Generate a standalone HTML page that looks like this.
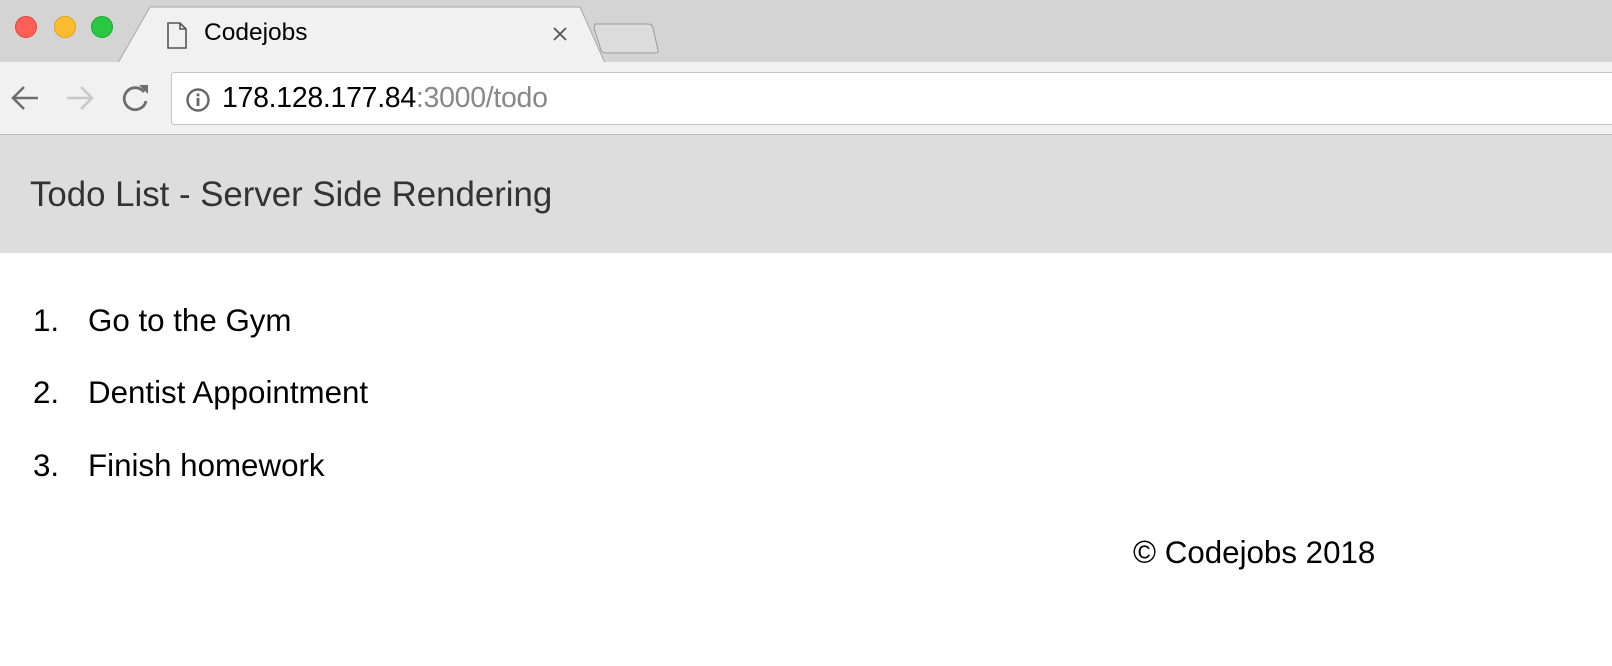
<!DOCTYPE html>
<html><head><style>
*{margin:0;padding:0;box-sizing:border-box}
body{width:1612px;height:666px;overflow:hidden;background:#fff;font-family:"Liberation Sans",Arial,sans-serif;position:relative}
.strip{position:absolute;left:0;top:0;width:1612px;height:63px;background:#d3d4d3;border-bottom:1px solid #a8a8a8}
.dot{position:absolute;top:16px;width:22px;height:22px;border-radius:50%}
.toolbar{position:absolute;left:0;top:62px;width:1612px;height:73px;background:#f1f1f1;border-bottom:1px solid #b8b8b8}
.addr{position:absolute;left:171px;top:10px;width:1460px;height:53px;background:#fff;border:1px solid #c2c2c2;border-radius:3px}
.url{position:absolute;left:50px;top:9px;font-size:28.5px;color:#000;letter-spacing:-0.3px}
.header{position:absolute;left:0;top:135px;width:1612px;height:118px;background:#dddddd}
.header h1{position:absolute;left:30px;top:40px;font-size:34.8px;font-weight:normal;color:#333}
.item{position:absolute;font-size:31.3px;color:#000}
</style></head><body>
<div class="strip"></div>
<div class="dot" style="left:15px;background:#fe5f57;border:1px solid #e0443e"></div>
<div class="dot" style="left:54px;background:#febc2e;border:1px solid #dea123"></div>
<div class="dot" style="left:91px;background:#28c840;border:1px solid #1aab29"></div>
<svg style="position:absolute;left:0;top:0" width="700" height="64">
<path d="M118 63 L150 7 L580 7 L605 63 Z" fill="#f1f1f1" stroke="#a8a8a8" stroke-width="1"/>
<rect x="118" y="62" width="488" height="3" fill="#f1f1f1"/>
<path d="M595 24 L648 24 Q652 24 653 28 L658 50 Q659 53 655 53 L606 53 Q602 53 601 50 L594 28 Z" fill="#dcdcdc" stroke="#9a9a9a" stroke-width="1"/>
<path d="M168 23 L180 23 L186 29 L186 48 L168 48 Z M180 23 L180 29 L186 29" fill="none" stroke="#555" stroke-width="1.6"/>
<path d="M554 28 L566 40 M566 28 L554 40" stroke="#555" stroke-width="1.8"/>
</svg>
<div style="position:absolute;left:204px;top:19px;font-size:24.5px;color:#000">Codejobs</div>
<div class="toolbar">
<svg style="position:absolute;left:0;top:0" width="170" height="73">
<path d="M38 36 L14 36 M24 25 L13 36 L24 47" fill="none" stroke="#6e6e6e" stroke-width="2.6"/>
<path d="M67 36 L91 36 M81 25 L92 36 L81 47" fill="none" stroke="#c8c8c8" stroke-width="2.6"/>
<path d="M144 30 A11 11 0 1 0 146 39" fill="none" stroke="#6e6e6e" stroke-width="2.8"/>
<path d="M139 23 L148 23 L148 32 Z" fill="#6e6e6e"/>
</svg>
<div class="addr">
<svg style="position:absolute;left:13px;top:14px" width="26" height="26"><circle cx="13" cy="13" r="10.5" fill="none" stroke="#666" stroke-width="2.4"/><rect x="11.6" y="11" width="2.8" height="8" fill="#666"/><rect x="11.6" y="6.5" width="2.8" height="2.8" fill="#666"/></svg>
<div class="url">178.128.177.84<span style="color:#888">:3000/todo</span></div>
</div>
</div>
<div class="header"><h1>Todo List - Server Side Rendering</h1></div>
<div class="item" style="left:33px;top:303px">1.</div><div class="item" style="left:88px;top:303px">Go to the Gym</div>
<div class="item" style="left:33px;top:375px">2.</div><div class="item" style="left:88px;top:375px">Dentist Appointment</div>
<div class="item" style="left:33px;top:448px">3.</div><div class="item" style="left:88px;top:448px">Finish homework</div>
<div class="item" style="left:1133px;top:535px">© Codejobs 2018</div>
</body></html>
